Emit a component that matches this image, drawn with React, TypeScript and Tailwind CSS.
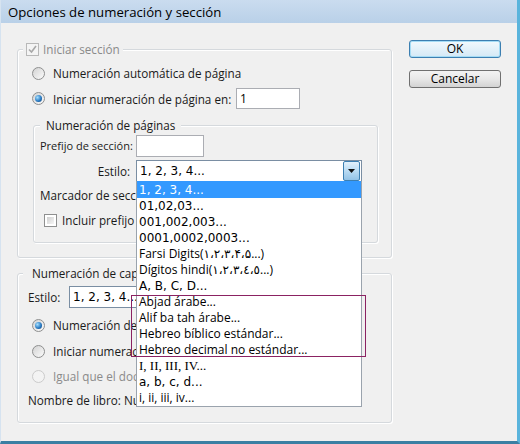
import React from 'react'

const ui = "font-['Open_Sans','Noto_Sans',sans-serif]"

type Kind = 'tahoma' | 'segoe' | 'serif'

const styles: { label: string; kind: Kind }[] = [
  { label: '1, 2, 3, 4...', kind: 'tahoma' },
  { label: '01,02,03...', kind: 'tahoma' },
  { label: '001,002,003...', kind: 'tahoma' },
  { label: '0001,0002,0003...', kind: 'tahoma' },
  { label: 'Farsi Digits(۱،۲،۳،۴،۵...)', kind: 'segoe' },
  { label: 'Dígitos hindi(١،٢،٣،٤،٥...)', kind: 'segoe' },
  { label: 'A, B, C, D...', kind: 'tahoma' },
  { label: 'Abjad árabe...', kind: 'segoe' },
  { label: 'Alif ba tah árabe...', kind: 'segoe' },
  { label: 'Hebreo bíblico estándar...', kind: 'segoe' },
  { label: 'Hebreo decimal no estándar...', kind: 'segoe' },
  { label: 'I, II, III, IV...', kind: 'serif' },
  { label: 'a, b, c, d...', kind: 'tahoma' },
  { label: 'i, ii, iii, iv...', kind: 'segoe' },
]

const kindClass: Record<Kind, string> = {
  tahoma: "font-['DejaVu_Sans',sans-serif] text-[12px]",
  segoe: "font-['Open_Sans','DejaVu_Sans',sans-serif] text-[12px]",
  serif: "font-['Liberation_Serif','DejaVu_Serif',serif] text-[13px]",
}

function Radio({ checked = false, disabled = false }: { checked?: boolean; disabled?: boolean }) {
  return (
    <span
      className={`flex h-[13px] w-[13px] shrink-0 items-center justify-center rounded-full border ${
        disabled ? 'border-[#cbcbcb] bg-[#f3f3f3]' : 'border-[#8e8f8f] bg-linear-to-br from-[#d3d3d3] to-[#fbfbfb]'
      }`}
    >
      {checked && (
        <span className="h-[7px] w-[7px] rounded-full bg-[radial-gradient(circle_at_35%_35%,#a6e0ff_0%,#2b7cc4_55%,#0c3c72_100%)]" />
      )}
    </span>
  )
}

function Checkbox({ checked = false, disabled = false }: { checked?: boolean; disabled?: boolean }) {
  return (
    <span
      className={`flex h-[13px] w-[13px] shrink-0 items-center justify-center border ${
        disabled ? 'border-[#b8b8b8] bg-[#f4f4f4]' : 'border-[#8e8f8f] bg-white p-[2px]'
      }`}
    >
      {checked ? (
        <svg width="11" height="11" viewBox="0 0 11 11">
          <path d="M2 5.5 L4.5 8 L9 2" fill="none" stroke="#a8a8a8" strokeWidth="1.6" />
        </svg>
      ) : (
        <span className="h-full w-full bg-linear-to-br from-[#cfcfcf] to-[#f6f6f6]" />
      )}
    </span>
  )
}

function TextBox({ value = '', className = '' }: { value?: string; className?: string }) {
  return (
    <div className={`flex items-center border border-[#abadb3] bg-white px-[3px] text-[12px] text-black ${className}`}>
      {value}
    </div>
  )
}

function Button({ label, primary = false }: { label: string; primary?: boolean }) {
  return (
    <button
      className={`flex h-[18px] w-[92px] items-center justify-center rounded-[3px] border text-[12px] text-black ${
        primary
          ? 'border-[#3c7fb1] bg-linear-to-b from-[#f2f9fd] to-[#d4e9f6] shadow-[inset_0_0_0_1px_#a5dcf5]'
          : 'border-[#707070] bg-linear-to-b from-[#f3f3f3] via-[#e8e8e8] to-[#d3d3d3]'
      }`}
    >
      {label}
    </button>
  )
}

// text that runs under the open list is cut at the list's left edge
function Clipped({ text, width }: { text: string; width: string }) {
  return <span className={`block overflow-hidden whitespace-nowrap ${width}`}>{text}</span>
}

const groupBox = 'flex flex-col rounded-[3px] border border-[#d5d9dd] shadow-[inset_1px_1px_0_#ffffff,1px_1px_0_#ffffff]'

export default function App() {
  return (
    <div
      className={`${ui} relative flex h-[444px] w-[520px] flex-col overflow-hidden border-r-[3px] border-b-[3px] border-l border-r-[#5ab4dc] border-b-[#3a7fa3] border-l-[#d6e3f0] bg-[#f0f0f0] text-[11.7px] leading-[16px] text-[#1a1a1a]`}
    >
      {/* title bar */}
      <div className="flex h-[23px] shrink-0 items-center bg-linear-to-b from-[#cadcef] to-[#b9d0e8] pl-[7px] text-[13.2px] text-black">
        Opciones de numeración y sección
      </div>

      <div className="flex">
        {/* left column */}
        <div className="flex flex-col pl-[16px] pt-[26px]">
          {/* Iniciar sección */}
          <div className={`${groupBox} h-[209px] w-[375px]`}>
            <div className="-mt-[9px] ml-[5px] flex h-[16px] w-fit items-center gap-[4px] bg-[#f0f0f0] px-[3px] text-[#8a8a8a]">
              <Checkbox checked disabled />
              <span>Iniciar sección</span>
            </div>
            <div className="mt-[8px] flex h-[16px] items-center pl-[14px]">
              <Radio />
              <span className="ml-[8px]">Numeración automática de página</span>
            </div>
            <div className="mt-[7px] flex h-[21px] items-center pl-[14px]">
              <Radio checked />
              <span className="ml-[8px] w-[183px] whitespace-nowrap">Iniciar numeración de página en:</span>
              <TextBox value="1" className="h-[21px] w-[64px]" />
            </div>

            {/* Numeración de páginas */}
            <div className={`${groupBox} ml-[15px] mt-[16px] h-[118px] w-[345px]`}>
              <div className="-mt-[9px] ml-[6px] h-[16px] w-fit bg-[#f0f0f0] px-[6px]">Numeración de páginas</div>
              <div className="mt-[2px] flex h-[22px] items-center pl-[6px]">
                <span className="w-[96px] text-[11px]">Prefijo de sección:</span>
                <TextBox className="h-[22px] w-[68px]" />
              </div>
              <div className="mt-[3px] flex h-[22px] items-center pl-[6px]">
                <span className="mr-[6px] w-[90px] text-right">Estilo:</span>
                <div className="relative flex h-[22px] w-[226px] items-center border border-[#7a8ea3] bg-white">
                  <span className={`${kindClass.tahoma} flex-1 pl-[3px] text-black`}>1, 2, 3, 4...</span>
                  <span className="mr-px flex h-[20px] w-[17px] items-center justify-center rounded-[2px] border border-[#3c7fb1] bg-linear-to-b from-[#e3f1fb] via-[#b9dbf3] to-[#93c3e6]">
                    <svg width="7" height="4" viewBox="0 0 7 4">
                      <path d="M0 0 H7 L3.5 4 Z" fill="#111" />
                    </svg>
                  </span>

                  {/* open list */}
                  <div className="absolute left-[-1px] top-full z-10 flex w-[226px] flex-col border-x border-b border-[#9aa3ad] bg-white">
                    {styles.map((s, i) => (
                      <div
                        key={s.label}
                        className={`${kindClass[s.kind]} flex items-center whitespace-nowrap pl-[2px] ${
                          i === 0 ? 'h-[17px] bg-[#3399ff] text-white' : 'h-[16px] text-black'
                        }`}
                      >
                        {s.label}
                      </div>
                    ))}
                    <div className="pointer-events-none absolute left-[-6px] top-[114px] h-[62px] w-[235px] border border-[#8b2262]" />
                  </div>
                </div>
              </div>
              <div className="mt-[5px] flex h-[16px] items-center pl-[6px]">
                <Clipped text="Marcador de sección:" width="w-[96px]" />
              </div>
              <div className="mt-[9px] flex h-[16px] items-center pl-[10px]">
                <Checkbox />
                <span className="ml-[5px]">
                  <Clipped text="Incluir prefijo al numerar páginas" width="w-[75px]" />
                </span>
              </div>
            </div>
          </div>

          {/* Numeración de capítulos */}
          <div className={`${groupBox} mt-[15px] h-[150px] w-[375px]`}>
            <div className="-mt-[9px] ml-[5px] h-[16px] w-fit bg-[#f0f0f0] pl-[9px] pr-[12px]">
              <Clipped text="Numeración de capítulos del documento" width="w-[104px]" />
            </div>
            <div className="mt-[5px] flex h-[22px] items-center pl-[10px]">
              <span className="w-[41px]">Estilo:</span>
              <div className="flex h-[22px] w-[293px] items-center border border-[#7a8ea3] bg-white">
                <span className={`${kindClass.tahoma} block w-[66px] overflow-hidden whitespace-nowrap pl-[3px] text-black`}>
                  1, 2, 3, 4...
                </span>
              </div>
            </div>
            <div className="mt-[9px] flex h-[16px] items-center pl-[14px]">
              <Radio checked />
              <span className="ml-[8px]">
                <Clipped text="Numeración de capítulo automática" width="w-[83px]" />
              </span>
            </div>
            <div className="mt-[10px] flex h-[16px] items-center pl-[14px]">
              <Radio />
              <span className="ml-[8px]">
                <Clipped text="Iniciar numeración de capítulo en:" width="w-[83px]" />
              </span>
            </div>
            <div className="mt-[9px] flex h-[16px] items-center pl-[14px] text-[#8a8a8a]">
              <Radio disabled />
              <span className="ml-[8px]">
                <Clipped text="Igual que el documento anterior" width="w-[83px]" />
              </span>
            </div>
            <div className="mt-[8px] flex h-[16px] items-center pl-[10px]">
              <Clipped text="Nombre de libro: Numeración" width="w-[108px]" />
            </div>
          </div>
        </div>

        {/* buttons */}
        <div className="flex flex-col gap-[12px] pl-[17px] pt-[17px]">
          <Button label="OK" primary />
          <Button label="Cancelar" />
        </div>
      </div>
    </div>
  )
}
